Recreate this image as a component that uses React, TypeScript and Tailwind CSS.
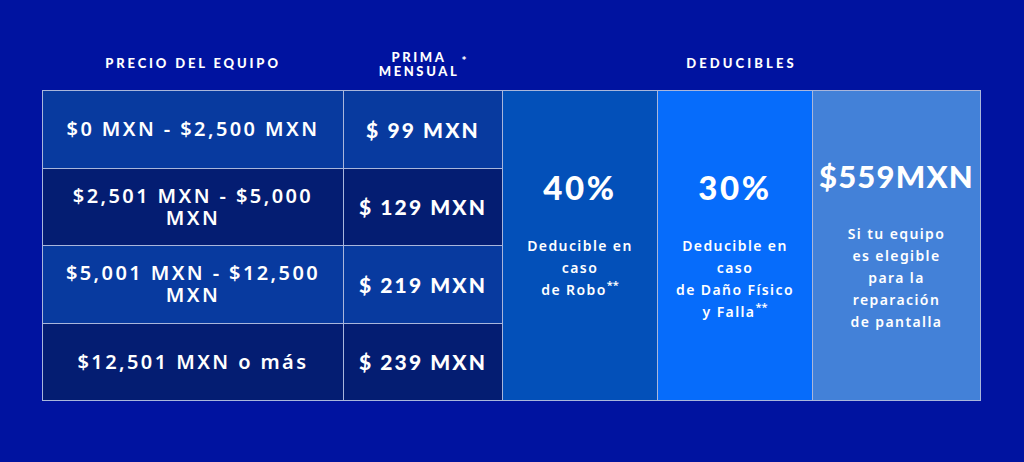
import React from 'react';

const rangos = [
  { precio: '$0 MXN - $2,500 MXN', prima: '$ 99 MXN', bg: 'bg-[#083a9f]' },
  { precio: '$2,501 MXN - $5,000 MXN', prima: '$ 129 MXN', bg: 'bg-[#041d72]' },
  { precio: '$5,001 MXN - $12,500 MXN', prima: '$ 219 MXN', bg: 'bg-[#083a9f]' },
  { precio: '$12,501 MXN o más', prima: '$ 239 MXN', bg: 'bg-[#041d72]' },
];

const heavy = { fontFamily: 'Lato, "Noto Sans", sans-serif' };
const body = { fontFamily: '"Noto Sans", "Open Sans", sans-serif' };

const App: React.FC = () => {
  return (
    <div className="w-[1024px] h-[462px] bg-[#0013a0] text-white pt-[46px] pl-[42px]">
      {/* encabezados */}
      <div className="flex h-[44px] w-[939px]" style={heavy}>
        <div className="w-[302px] flex items-center justify-center pb-[8px] text-[13px] font-black tracking-[0.22em]">
          PRECIO DEL EQUIPO
        </div>
        <div className="w-[158px] flex items-center justify-center pb-[8px] pr-[8px]">
          <div className="relative text-center text-[13px] font-black tracking-[0.2em] leading-[14px]">
            PRIMA
            <br />
            MENSUAL
            <span className="absolute -right-[10px] top-[4px] text-[12px]">*</span>
          </div>
        </div>
        <div className="flex-1 flex items-center justify-center pb-[8px] text-[13px] font-black tracking-[0.24em]">
          DEDUCIBLES
        </div>
      </div>

      {/* tabla */}
      <div className="flex w-[939px] h-[311px] border border-[#a9b6dc]">
        <div className="w-[459px] flex flex-col">
          {rangos.map((r, i) => (
            <div
              key={r.precio}
              className={`flex flex-1 ${r.bg} ${i < rangos.length - 1 ? 'border-b border-[#a9b6dc]' : ''}`}
            >
              <div
                className="w-[301px] flex items-center justify-center text-center px-[12px] text-[20px] leading-[22px] font-semibold tracking-[0.12em] border-r border-[#a9b6dc]"
                style={body}
              >
                {r.precio}
              </div>
              <div
                className="flex-1 flex items-center justify-center text-[21px] font-black tracking-[0.1em]"
                style={heavy}
              >
                {r.prima}
              </div>
            </div>
          ))}
        </div>

        <div className="w-[155px] bg-[#0350b9] border-l border-[#a9b6dc] flex flex-col items-center justify-center pb-[22px] text-center">
          <div className="text-[33px] font-black tracking-[0.08em] leading-[36px]" style={heavy}>
            40%
          </div>
          <div className="mt-[30px] text-[14px] leading-[22px] font-semibold tracking-[0.1em]" style={body}>
            Deducible en
            <br />
            caso
            <br />
            de Robo<sup className="text-[11px] tracking-normal">**</sup>
          </div>
        </div>

        <div className="w-[155px] bg-[#066cfb] border-l border-[#a9b6dc] flex flex-col items-center justify-center text-center">
          <div className="text-[33px] font-black tracking-[0.08em] leading-[36px]" style={heavy}>
            30%
          </div>
          <div className="mt-[30px] text-[14px] leading-[22px] font-semibold tracking-[0.1em]" style={body}>
            Deducible en
            <br />
            caso
            <br />
            de Daño Físico
            <br />
            y Falla<sup className="text-[11px] tracking-normal">**</sup>
          </div>
        </div>

        <div className="flex-1 bg-[#4381d8] border-l border-[#a9b6dc] flex flex-col items-center justify-center text-center">
          <div className="text-[31px] font-black tracking-[0.04em] leading-[34px]" style={heavy}>
            $559MXN
          </div>
          <div className="mt-[30px] text-[14px] leading-[22px] font-semibold tracking-[0.1em]" style={body}>
            Si tu equipo
            <br />
            es elegible
            <br />
            para la
            <br />
            reparación
            <br />
            de pantalla
          </div>
        </div>
      </div>
    </div>
  );
};

export default App;
